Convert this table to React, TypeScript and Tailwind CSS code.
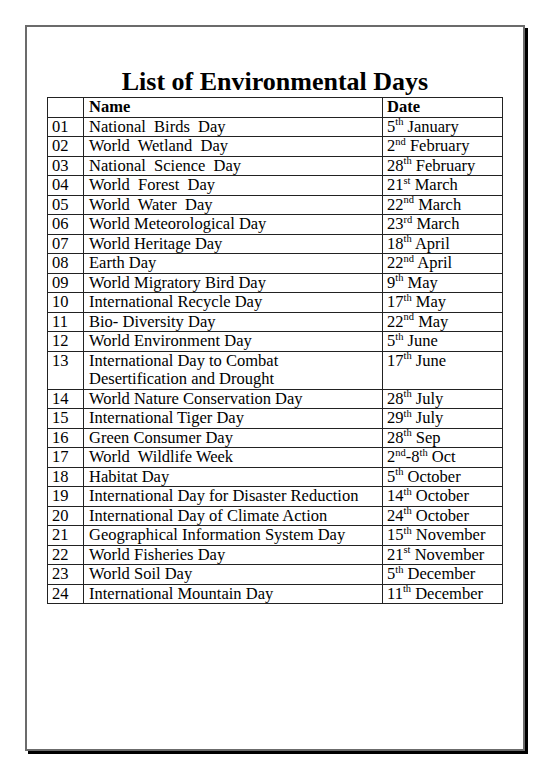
import React from "react";

type Row = { n: string; name: React.ReactNode; d: string; s: string; m: string; d2?: string; s2?: string };

const rows: Row[] = [
  { n: "01", name: "National  Birds  Day", d: "5", s: "th", m: "January" },
  { n: "02", name: "World  Wetland  Day", d: "2", s: "nd", m: "February" },
  { n: "03", name: "National  Science  Day", d: "28", s: "th", m: "February" },
  { n: "04", name: "World  Forest  Day", d: "21", s: "st", m: "March" },
  { n: "05", name: "World  Water  Day", d: "22", s: "nd", m: "March" },
  { n: "06", name: "World Meteorological Day", d: "23", s: "rd", m: "March" },
  { n: "07", name: "World Heritage Day", d: "18", s: "th", m: "April" },
  { n: "08", name: "Earth Day", d: "22", s: "nd", m: "April" },
  { n: "09", name: "World Migratory Bird Day", d: "9", s: "th", m: "May" },
  { n: "10", name: "International Recycle Day", d: "17", s: "th", m: "May" },
  { n: "11", name: "Bio- Diversity Day", d: "22", s: "nd", m: "May" },
  { n: "12", name: "World Environment Day", d: "5", s: "th", m: "June" },
  {
    n: "13",
    name: (
      <>
        International Day to Combat
        <br />
        Desertification and Drought
      </>
    ),
    d: "17",
    s: "th",
    m: "June",
  },
  { n: "14", name: "World Nature Conservation Day", d: "28", s: "th", m: "July" },
  { n: "15", name: "International Tiger Day", d: "29", s: "th", m: "July" },
  { n: "16", name: "Green Consumer Day", d: "28", s: "th", m: "Sep" },
  { n: "17", name: "World  Wildlife Week", d: "2", s: "nd", m: "Oct", d2: "-8", s2: "th" },
  { n: "18", name: "Habitat Day", d: "5", s: "th", m: "October" },
  { n: "19", name: "International Day for Disaster Reduction", d: "14", s: "th", m: "October" },
  { n: "20", name: "International Day of Climate Action", d: "24", s: "th", m: "October" },
  { n: "21", name: "Geographical Information System Day", d: "15", s: "th", m: "November" },
  { n: "22", name: "World Fisheries Day", d: "21", s: "st", m: "November" },
  { n: "23", name: "World Soil Day", d: "5", s: "th", m: "December" },
  { n: "24", name: "International Mountain Day", d: "11", s: "th", m: "December" },
];

const cell = "border border-[#222] align-top p-0 leading-[18.5px] whitespace-pre";

function Sup({ children }: { children: React.ReactNode }) {
  return <sup className="text-[10.5px] top-[-0.6em]">{children}</sup>;
}

export default function App() {
  return (
    <div
      className="w-[550px] h-[777px] bg-white pt-[25px] pl-[25px] text-black"
      style={{ fontFamily: '"Liberation Serif", "Times New Roman", serif' }}
    >
      <div className="w-[500px] h-[726px] border-2 border-[#6b6b6b] shadow-[3px_3px_0_#000] pt-[40px] px-[20px]">
        <h1 className="h-[30px] leading-[30px] text-[26px] font-bold text-center">List of Environmental Days</h1>
        <table className="border-collapse w-[455px] table-fixed text-[16.5px]">
          <colgroup>
            <col className="w-[36px]" />
            <col className="w-[299px]" />
            <col className="w-[120px]" />
          </colgroup>
          <tbody>
            <tr>
              <td className={`${cell} pl-[4px]`}></td>
              <td className={`${cell} pl-[5px] font-bold`}>Name</td>
              <td className={`${cell} pl-[4px] font-bold`}>Date</td>
            </tr>
            {rows.map((r) => (
              <tr key={r.n}>
                <td className={`${cell} pl-[4px]`}>{r.n}</td>
                <td className={`${cell} pl-[5px]`}>{r.name}</td>
                <td className={`${cell} pl-[4px]`}>
                  {r.d}
                  <Sup>{r.s}</Sup>
                  {r.d2 ? (
                    <>
                      {r.d2}
                      <Sup>{r.s2}</Sup>
                    </>
                  ) : null}{" "}
                  {r.m}
                </td>
              </tr>
            ))}
          </tbody>
        </table>
      </div>
    </div>
  );
}
